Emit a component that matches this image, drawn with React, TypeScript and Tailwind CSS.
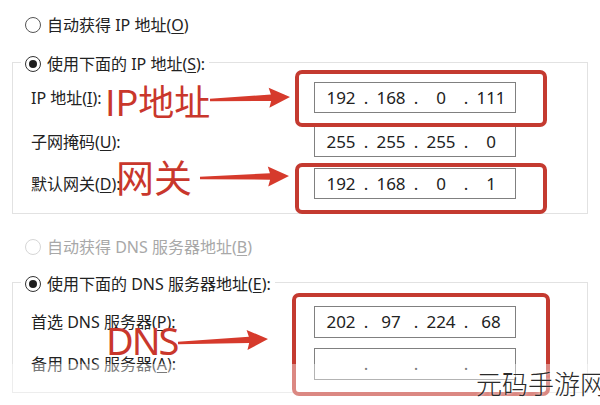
import React from 'react';
import clsx from 'clsx';

const Key = ({ k }: { k: string }) => (
  <>
    (<span className="underline underline-offset-2 decoration-1">{k}</span>)
  </>
);

function Radio({ checked, disabled }: { checked?: boolean; disabled?: boolean }) {
  return (
    <span
      className={clsx(
        'w-[16px] h-[16px] rounded-full flex items-center justify-center shrink-0 bg-white',
        checked ? 'border-[1.5px] border-[#333]' : 'border',
        !checked && (disabled ? 'border-[#d6d6d6]' : 'border-[#555]')
      )}
    >
      {checked && <span className="w-[8px] h-[8px] rounded-full bg-[#1e1e1e]" />}
    </span>
  );
}

function RadioLabel({ checked, disabled, children }: { checked?: boolean; disabled?: boolean; children: React.ReactNode }) {
  return (
    <span className={clsx('flex items-center gap-[6px] h-[26px] text-[16px]', disabled ? 'text-[#a8a8a8]' : 'text-[#222]')}>
      <Radio checked={checked} disabled={disabled} />
      <span>{children}</span>
    </span>
  );
}

function IpField({ parts }: { parts: string[] }) {
  return (
    <div className="w-[202px] h-full border border-[#808080] bg-white flex items-center pl-[5px] text-[17px] text-[#222]">
      {parts.map((p, i) => (
        <React.Fragment key={i}>
          {i > 0 && <span className="w-[8px] text-center">.</span>}
          <span className="w-[42px] text-center">{p}</span>
        </React.Fragment>
      ))}
    </div>
  );
}

function Row({ label, parts, className }: { label: React.ReactNode; parts: string[]; className?: string }) {
  return (
    <div className={clsx('grid grid-cols-[283px_202px] items-center', className)}>
      <span className="text-[16px] text-[#222]">{label}</span>
      <IpField parts={parts} />
    </div>
  );
}

const arrows = [
  { x1: 210, y1: 100, x2: 290, y2: 97 },
  { x1: 200, y1: 178, x2: 289, y2: 176 },
  { x1: 178, y1: 343, x2: 268, y2: 339 },
];

function Arrows() {
  return (
    <svg className="absolute inset-0 pointer-events-none" width={600} height={405}>
      {arrows.map((a, i) => {
        const L = Math.hypot(a.x2 - a.x1, a.y2 - a.y1);
        const deg = (Math.atan2(a.y2 - a.y1, a.x2 - a.x1) * 180) / Math.PI;
        const pts = [
          [0, -1.3], [L - 19, -3.2], [L - 21, -10], [L, 0], [L - 21, 10], [L - 19, 3.2], [0, 1.3],
        ]
          .map((p) => p.join(','))
          .join(' ');
        return <polygon key={i} points={pts} fill="#d63a2c" transform={`translate(${a.x1} ${a.y1}) rotate(${deg})`} />;
      })}
    </svg>
  );
}

export default function App() {
  return (
    <div className="relative w-[600px] h-[405px] bg-white overflow-hidden font-['Noto_Sans','Noto_Sans_CJK_SC',sans-serif]">
      <div className="flex flex-col pt-[12px]">
        <div className="pl-[25px]">
          <RadioLabel>
            自动获得 IP 地址<Key k="O" />
          </RadioLabel>
        </div>

        <fieldset className="mt-[9px] mx-[12px] border border-[#e2e2e2]">
          <legend className="ml-[8px] px-[4px] pt-[4px]">
            <RadioLabel checked>
              使用下面的 IP 地址<Key k="S" />:
            </RadioLabel>
          </legend>
          <div className="flex flex-col pl-[18px] pt-[5px] pb-[14px]">
            <Row className="h-[31px]" label={<>IP 地址<Key k="I" />:</>} parts={['192', '168', '0', '111']} />
            <Row className="h-[31px] mt-[13px]" label={<>子网掩码<Key k="U" />:</>} parts={['255', '255', '255', '0']} />
            <Row className="h-[31px] mt-[11px]" label={<>默认网关<Key k="D" />:</>} parts={['192', '168', '0', '1']} />
          </div>
        </fieldset>

        <div className="pl-[25px] mt-[20px]">
          <RadioLabel disabled>
            自动获得 DNS 服务器地址<Key k="B" />
          </RadioLabel>
        </div>

        <fieldset className="mt-[7px] mx-[12px] border border-[#e2e2e2]">
          <legend className="ml-[8px] px-[4px] pt-[4px]">
            <RadioLabel checked>
              使用下面的 DNS 服务器地址<Key k="E" />:
            </RadioLabel>
          </legend>
          <div className="flex flex-col pl-[18px] pt-[9px] pb-[12px]">
            <Row className="h-[32px]" label={<>首选 DNS 服务器<Key k="P" />:</>} parts={['202', '97', '224', '68']} />
            <Row className="h-[32px] mt-[10px]" label={<>备用 DNS 服务器<Key k="A" />:</>} parts={['', '', '', '']} />
          </div>
        </fieldset>
      </div>

      {/* red annotation boxes */}
      <div className="absolute left-[295px] top-[70px] w-[252px] h-[57px] border-[4px] border-[#c43a30] rounded-[7px]" />
      <div className="absolute left-[295px] top-[163px] w-[252px] h-[51px] border-[4px] border-[#c43a30] rounded-[7px]" />
      <div className="absolute left-[292px] top-[293px] w-[258px] h-[103px] border-[4px] border-[#c43a30] rounded-[7px]" />

      {/* red annotation text */}
      <span className="absolute left-[105px] top-[82px] text-[36px] leading-none text-[#c9372c] font-['Noto_Sans_CJK_SC',sans-serif]">
        IP地址
      </span>
      <span className="absolute left-[116px] top-[157px] text-[38px] leading-none text-[#c9372c] font-['Noto_Sans_CJK_SC',sans-serif]">
        网关
      </span>
      <span className="absolute left-[106px] top-[321px] text-[38px] leading-none tracking-[-2px] text-[#c9372c]">
        DNS
      </span>

      <Arrows />

      {/* faded bottom band + watermark */}
      <div className="absolute left-0 right-0 top-[364px] bottom-0 bg-white/40" />
      <span className="absolute left-[476px] top-[370px] text-[26px] leading-none font-light text-[#2a2a2a] whitespace-nowrap font-['Noto_Sans_CJK_SC',sans-serif] [text-shadow:0_0_3px_#fff]">
        元码手游网
      </span>
    </div>
  );
}
